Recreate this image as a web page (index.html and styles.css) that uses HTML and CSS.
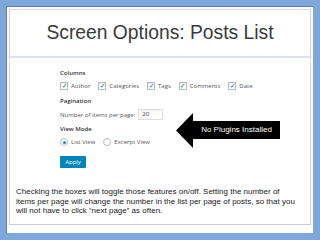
FILE: index.html
```html
<!DOCTYPE html>
<html>
<head>
<meta charset="utf-8">
<link rel="stylesheet" href="styles.css">
</head>
<body>
<div class="slide">
  <div class="frame">
    <div class="title">Screen Options: Posts List</div>
    <div class="body">
      <div class="shot">
        <div class="label">Columns</div>
        <div class="checks">
          <span class="item"><span class="cb">&#10003;</span>Author</span>
          <span class="item"><span class="cb">&#10003;</span>Categories</span>
          <span class="item"><span class="cb">&#10003;</span>Tags</span>
          <span class="item"><span class="cb">&#10003;</span>Comments</span>
          <span class="item"><span class="cb">&#10003;</span>Date</span>
        </div>
        <div class="label label-pag">Pagination</div>
        <div class="perpage">Number of items per page:<span class="input">20</span></div>
        <div class="label label-view">View Mode</div>
        <div class="radios">
          <span class="item"><span class="radio on"></span>List View</span>
          <span class="item"><span class="radio"></span>Excerpt View</span>
        </div>
        <div class="apply">Apply</div>
      </div>
      <p class="note">Checking the boxes will toggle those features on/off. Setting the number of items per page will change the number in the list per page of posts, so that you will not have to click “next page” as often.</p>
      <div class="callout">
        <svg class="arrow" width="104" height="35" viewBox="0 0 104 35"><path d="M0 17.5 L17 0 L17 8 L104 8 L104 26 L17 26 L17 35 Z" fill="#000"/></svg>
        <span class="callout-text">No Plugins Installed</span>
      </div>
    </div>
  </div>
</div>
</body>
</html>
```

FILE: styles.css
```css
html, body {
  margin: 0;
  padding: 0;
}
body {
  width: 320px;
  height: 240px;
  background: #7ea7dc;
  overflow: hidden;
}
.slide {
  position: relative;
  margin: 6px 0 0 6px;
  width: 307px;
  height: 227px;
  background: #fff;
  border-left: 1px solid #5b80b3;
  border-top: 1px solid #5b80b3;
  box-sizing: border-box;
  padding: 2px 2px 0 2px;
}
.frame {
  position: relative;
  height: 216px;
  border: 1px solid #d3d7ef;
  border-bottom: 1px solid #c9cde8;
  box-sizing: border-box;
}
.title {
  height: 46px;
  line-height: 46px;
  text-align: center;
  font-family: "Liberation Sans", Arial, sans-serif;
  font-size: 19.3px;
  color: #3a3a3a;
  border-bottom: 2px solid #dde2f5;
}
.body {
  position: relative;
}
.shot {
  margin-left: 50px;
  padding-top: 11px;
  font-family: "Open Sans", sans-serif;
  font-size: 6px;
  color: #555;
}
.label {
  height: 8px;
  line-height: 8px;
  font-weight: 600;
  color: #333;
}
.checks, .radios {
  display: flex;
  align-items: center;
  height: 10px;
  margin-top: 4px;
}
.checks .item {
  display: flex;
  align-items: center;
  margin-right: 8px;
}
.cb {
  width: 6px;
  height: 6px;
  border: 1px solid #bbb;
  margin-right: 3px;
  font-size: 6px;
  line-height: 6px;
  text-align: center;
  color: #1e8cbe;
  font-weight: bold;
  box-shadow: inset 0 1px 1px rgba(0,0,0,0.1);
}
.label-pag {
  margin-top: 6px;
}
.perpage {
  display: flex;
  align-items: center;
  height: 11px;
  margin-top: 4px;
}
.input {
  margin-left: 3px;
  width: 25px;
  height: 11px;
  box-sizing: border-box;
  border: 1px solid #ddd;
  padding-left: 3px;
  line-height: 9px;
  color: #333;
  box-shadow: inset 0 1px 1px rgba(0,0,0,0.07);
}
.label-view {
  margin-top: 5px;
}
.radios .item {
  display: flex;
  align-items: center;
  margin-right: 8px;
}
.radio {
  position: relative;
  width: 6px;
  height: 6px;
  border: 1px solid #bbb;
  border-radius: 50%;
  margin-right: 3px;
  margin-left: 0;
}
.radio.on::after {
  content: "";
  position: absolute;
  left: 1.5px;
  top: 1.5px;
  width: 3px;
  height: 3px;
  border-radius: 50%;
  background: #1e8cbe;
}
.apply {
  margin-top: 9px;
  width: 26px;
  height: 12px;
  line-height: 12px;
  text-align: center;
  background: #0085ba;
  color: #fff;
  border-radius: 1px;
  font-size: 6px;
}
.note {
  margin: 19px 0 0 6px;
  width: 280px;
  font-family: "Liberation Sans", Arial, sans-serif;
  font-size: 8px;
  line-height: 9.6px;
  color: #222;
}
.callout {
  position: absolute;
  left: 166px;
  top: 55px;
  width: 104px;
  height: 35px;
}
.arrow {
  display: block;
}
.callout-text {
  position: absolute;
  left: 17px;
  right: 0;
  top: 8px;
  height: 18px;
  line-height: 18px;
  text-align: center;
  font-family: "Liberation Sans", Arial, sans-serif;
  font-size: 8px;
  color: #fff;
}
```
